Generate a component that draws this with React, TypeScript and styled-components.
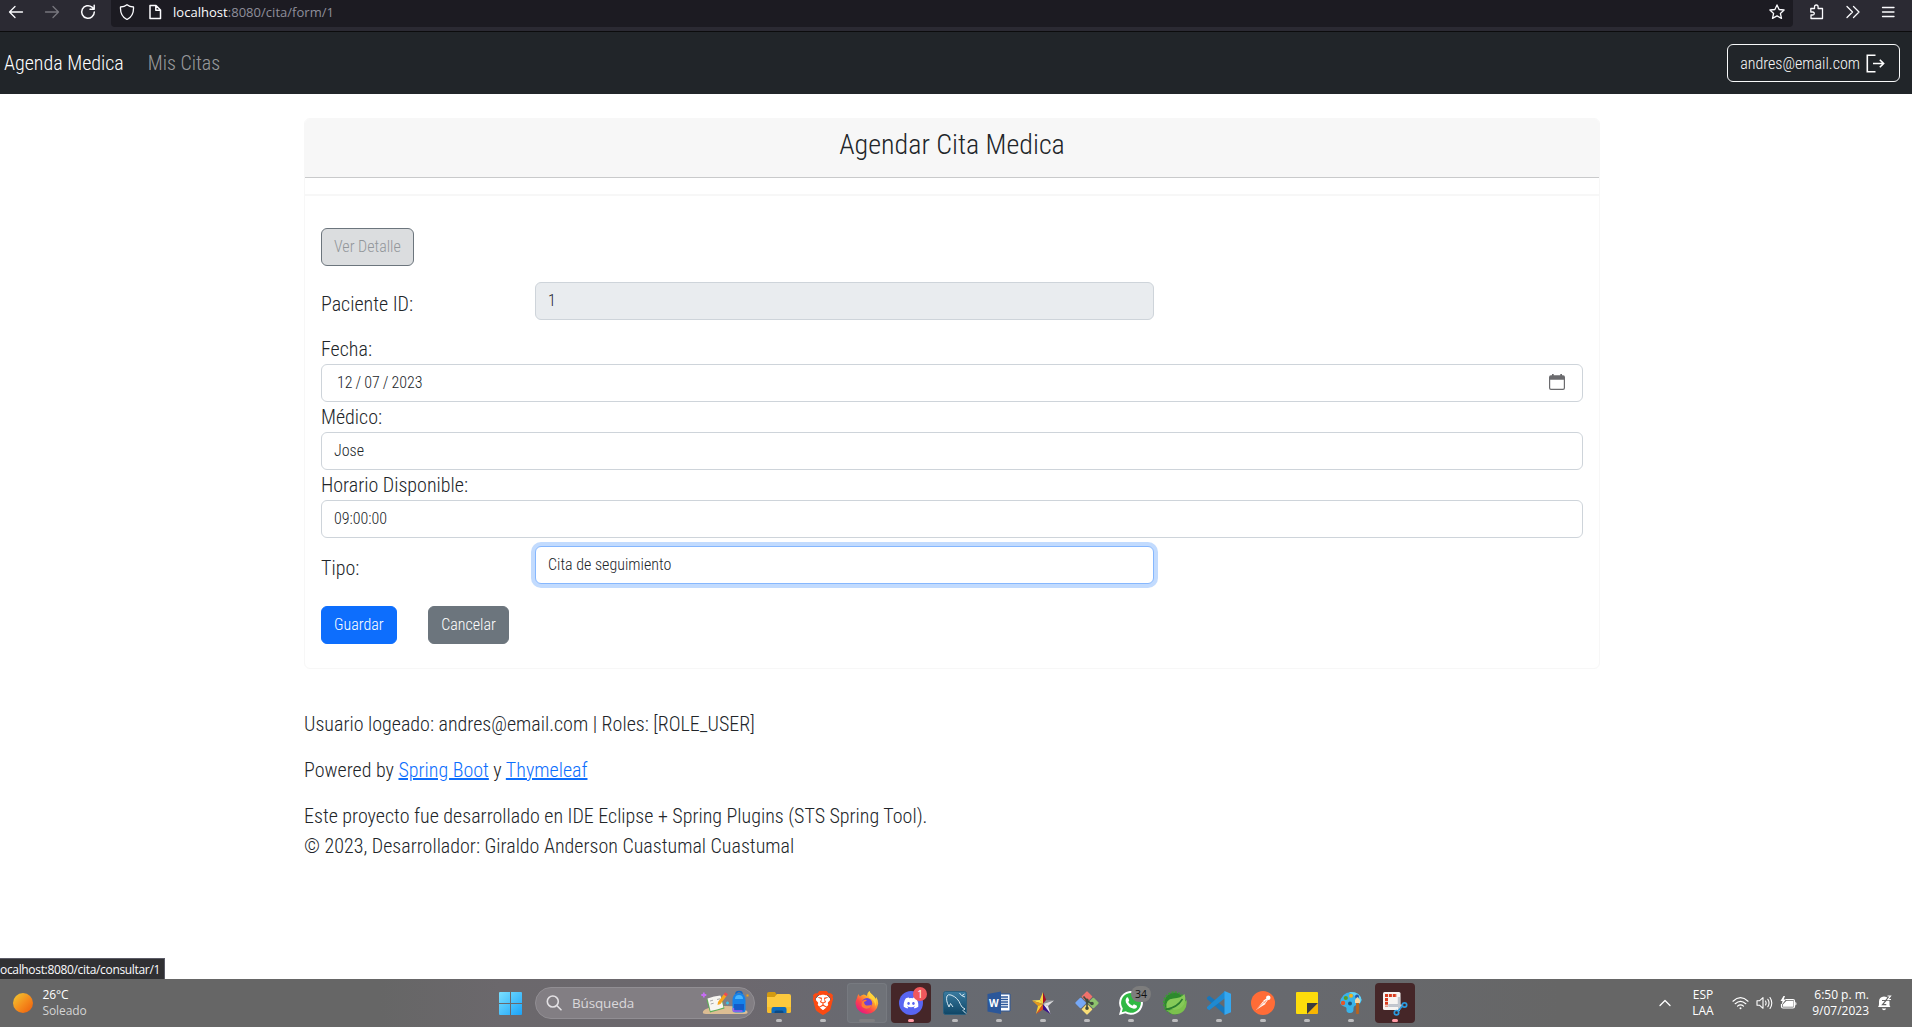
import React from "react";
import styled, { createGlobalStyle, css } from "styled-components";
import { FaDiscord } from "react-icons/fa";
import { SiBrave } from "react-icons/si";

const GlobalStyle = createGlobalStyle`
  *, *::before, *::after { box-sizing: border-box; }
  body {
    margin: 0;
    background: #fff;
    color: #212529;
    font-family: "Roboto Condensed", Roboto, sans-serif;
    font-stretch: 75%;
    font-weight: 300;
    font-size: 20px;
    line-height: 30px;
    overflow: hidden;
  }
  svg { display: block; flex: none; }
`;

const uiFont = css`
  font-family: "Open Sans", "Noto Sans", sans-serif;
  font-stretch: 100%;
  font-weight: 400;
`;

const Screen = styled.div`
  height: 1027px;
  display: flex;
  flex-direction: column;
  overflow: hidden;
`;

/* ---------- Browser toolbar ---------- */

const Toolbar = styled.header`
  flex: none;
  height: 32px;
  display: flex;
  align-items: flex-start;
  background: #2b2a33;
  border-bottom: 1px solid #0c0c0d;
  color: #fbfbfe;
`;

const NavIcons = styled.div`
  width: 111px;
  height: 24px;
  display: flex;
  align-items: center;
  padding-left: 8px;
  gap: 20px;
`;

const AddressBar = styled.div`
  flex: 1;
  height: 27px;
  padding: 0 8px 4px;
  display: flex;
  align-items: center;
  background: #1c1b22;
  border-radius: 0 0 4px 4px;
`;

const Url = styled.div`
  ${uiFont}
  flex: 1;
  margin-left: 10px;
  font-size: 13px;
  line-height: 20px;
  letter-spacing: 0.03px;
  color: #8f8f9b;
  b { font-weight: 400; color: #fbfbfe; }
`;

const MenuIcons = styled.div`
  width: 119px;
  height: 23px;
  display: flex;
  align-items: center;
  padding-left: 16px;
  gap: 19.5px;
`;

/* ---------- Site navigation ---------- */

const Navbar = styled.nav`
  flex: none;
  height: 62px;
  padding: 0 12px 0 4px;
  display: flex;
  align-items: center;
  gap: 24px;
  background: #212529;
`;

const NavLink = styled.a<{ $active?: boolean }>`
  color: ${(p) => (p.$active ? "#fff" : "rgba(255, 255, 255, 0.55)")};
`;

const buttonTones = {
  light: css`color: #f8f9fa; border-color: #f8f9fa;`,
  primary: css`color: #fff; background: #0d6efd; border-color: #0d6efd;`,
  secondary: css`color: #fff; background: #6c757d; border-color: #6c757d;`,
  muted: css`color: #92969a; background: #dbdddf; border-color: #6c757d;`,
};

const Button = styled.button<{ $tone: keyof typeof buttonTones }>`
  height: 38px;
  padding: 6px 12px;
  display: inline-flex;
  align-items: center;
  gap: 7px;
  font: inherit;
  font-size: 16px;
  line-height: 24px;
  border: 1px solid;
  border-radius: 6px;
  background: transparent;
  ${(p) => buttonTones[p.$tone]}
`;

const UserButton = styled(Button)`
  margin-left: auto;
  padding: 7px 14px 5px 12px;
  gap: 6px;
  svg { margin-top: -1px; }
`;

/* ---------- Page ---------- */

const Main = styled.main`
  flex: 1;
  width: 1296px;
  margin-left: 304px;
  padding-top: 24px;
`;

const Card = styled.section`
  height: 551px;
  border: 1px solid #f7f7f7;
  border-radius: 6px;
`;

const CardHeader = styled.div`
  height: 59px;
  padding-top: 9px;
  background: #f7f7f7;
  border-bottom: 1px solid #c9cacb;
  border-radius: 5px 5px 0 0;
  text-align: center;
`;

const Title = styled.h3`
  margin: 0;
  font-size: 28px;
  font-weight: 300;
  line-height: 34px;
`;

const Divider = styled.div`
  height: 2px;
  margin-top: 16px;
  background: #f7f7f7;
`;

const Form = styled.form`
  padding: 32px 16px 0;
  display: flex;
  flex-direction: column;
  align-items: stretch;
`;

const InlineRow = styled.div<{ $top: number; $bottom: number }>`
  display: flex;
  margin: ${(p) => p.$top}px 0 ${(p) => p.$bottom}px;
`;

const InlineLabel = styled.label`
  width: 214px;
  padding-top: 7px;
`;

const Control = styled.div<{ $width?: number; $disabled?: boolean; $focus?: boolean }>`
  height: 38px;
  width: ${(p) => (p.$width ? `${p.$width}px` : "100%")};
  padding: 6px 12px;
  display: flex;
  justify-content: space-between;
  font-size: 16px;
  line-height: 24px;
  border: 1px solid ${(p) => (p.$focus ? "#86b7fe" : "#ced4da")};
  border-radius: 6px;
  background: ${(p) => (p.$disabled ? "#e9ecef" : "#fff")};
  box-shadow: ${(p) => (p.$focus ? "0 0 0 4px rgba(13, 110, 253, 0.25)" : "none")};
`;

const DateText = styled.span`
  margin-left: 3px;
  word-spacing: -0.6px;
`;

const CalendarSlot = styled.span`
  padding: 3px 5px 0 0;
`;

const Actions = styled.div`
  display: flex;
  gap: 31.6px;
`;

const Footer = styled.footer`
  padding-top: 40px;
  p { margin: 0 0 16px; }
  a { color: #0d6efd; text-decoration: underline; }
`;

/* Link preview shown over the page's lower left corner */
const StatusTip = styled.div`
  ${uiFont}
  position: absolute;
  left: 0;
  top: 958px;
  width: 165px;
  height: 21px;
  padding-top: 1px;
  background: #303033;
  border-top: 1px solid #5b5b66;
  border-right: 1px solid #5b5b66;
  color: #fbfbfe;
  font-size: 12px;
  line-height: 20px;
  letter-spacing: -0.33px;
  white-space: nowrap;
`;

/* ---------- Taskbar ---------- */

const Taskbar = styled.div`
  ${uiFont}
  flex: none;
  height: 48px;
  display: flex;
  align-items: center;
  background: linear-gradient(90deg, #666 0, #666 380px, #6b686c 500px, #6c686e 740px, #676a71 900px, #67696e 1300px, #666 1560px);
  color: #fff;
  font-size: 12px;
  line-height: 16px;
`;

const Weather = styled.div`
  width: 499px;
  padding-left: 13px;
  display: flex;
  align-items: center;
  gap: 9.5px;
  letter-spacing: -0.1px;
  span { display: block; color: #d4d4d4; }
  span:first-child { color: #fff; }
`;

const Sun = styled.i`
  width: 20px;
  height: 20px;
  border-radius: 50%;
  background: linear-gradient(135deg, #f1c02f 10%, #f58a1b 55%, #ee650f 90%);
`;

const Search = styled.div`
  width: 220px;
  height: 32px;
  margin: 0 2px 0 13px;
  padding: 0 5px 0 10px;
  display: flex;
  align-items: center;
  border-radius: 16px;
  border: 1px solid #918e93;
  background: #827e83;
  color: #dad8db;
  font-size: 13.5px;
  letter-spacing: -0.15px;
  span { flex: 1; margin-left: 10px; }
`;

const TaskApp = styled.div<{ $tone?: "active" | "alert" }>`
  position: relative;
  width: 40px;
  height: 40px;
  margin: 0 2px;
  display: flex;
  align-items: center;
  justify-content: center;
  border-radius: 4px;
  ${(p) => p.$tone === "active" && css`background: #6f7278; box-shadow: inset 0 0 0 1px #777a80;`}
  ${(p) => p.$tone === "alert" && css`background: #452628;`}
  &::after {
    content: "";
    position: absolute;
    bottom: 1px;
    left: 50%;
    width: ${(p) => (p.$tone === "active" ? 16 : 6)}px;
    height: 3px;
    transform: translateX(-50%);
    border-radius: 2px;
    background: ${(p) => (p.$tone === "alert" ? "#ff99a4" : p.$tone === "active" ? "#7f7e80" : "#bcbcbe")};
  }
`;

const Badge = styled.span<{ $kind: "red" | "grey" }>`
  position: absolute;
  top: ${(p) => (p.$kind === "red" ? 4 : 3)}px;
  right: ${(p) => (p.$kind === "red" ? 4 : 0)}px;
  width: ${(p) => (p.$kind === "red" ? 14 : 20)}px;
  height: ${(p) => (p.$kind === "red" ? 14 : 16)}px;
  border-radius: 8px;
  background: ${(p) => (p.$kind === "red" ? "#f0585c" : "#7d7d7d")};
  color: ${(p) => (p.$kind === "red" ? "#fff" : "#111")};
  font-size: ${(p) => (p.$kind === "red" ? 10 : 10.5)}px;
  line-height: ${(p) => (p.$kind === "red" ? 14 : 16)}px;
  text-align: center;
`;

const Tray = styled.div`
  margin-left: auto;
  padding-right: 20px;
  display: flex;
  align-items: center;
`;

const TrayText = styled.div<{ $align: "center" | "right"; $width: number; $right: number }>`
  width: ${(p) => p.$width}px;
  margin-right: ${(p) => p.$right}px;
  text-align: ${(p) => p.$align};
  white-space: nowrap;
`;

const TrayIcons = styled.div`
  display: flex;
  align-items: center;
  gap: 7px;
`;

const Chevron = styled.div`
  margin-right: 12px;
`;

/* ---------- Icons ---------- */

type LineProps = { size?: number; d: string; width?: number; color?: string; box?: number };
const Line = ({ size = 16, d, width = 1.3, color = "currentColor", box = 16 }: LineProps) => (
  <svg width={size} height={size} viewBox={`0 0 ${box} ${box}`} fill="none" stroke={color} strokeWidth={width} strokeLinecap="round" strokeLinejoin="round">
    <path d={d} />
  </svg>
);

const LogoutIcon = () => (
  <svg width="19" height="19" viewBox="0 0 19 19" fill="none" stroke="#fff" strokeWidth="1.6">
    <path d="M9.500 1.300H1.300v16.400h8.200M7 9.500h10.500M13.800 5.800l3.800 3.700-3.800 3.700" />
  </svg>
);

const CalendarIcon = () => (
  <svg width="16" height="16" viewBox="0 0 16 16">
    <path d="M3 0h1.700v1.300h6.600V0H13v1.300h1A2 2 0 0 1 16 3.300V14a2 2 0 0 1-2 2H2a2 2 0 0 1-2-2V3.300a2 2 0 0 1 2-2h1zM1.200 5.700V14q0 .8.8.8h12q.8 0 .8-.8V5.700z" fill="#6b6b6e" fillRule="evenodd" />
  </svg>
);

const WindowsLogo = () => (
  <svg width="23" height="23" viewBox="0 0 23 23">
    <defs>
      <linearGradient id="win" x1="0" y1="0" x2="1" y2="1">
        <stop offset="0" stopColor="#7be0ff" />
        <stop offset="1" stopColor="#1ba3f8" />
      </linearGradient>
    </defs>
    <path d="M0 1q0-1 1-1h10v11H0zM12 0h10q1 0 1 1v10H12zM0 12h11v11H1q-1 0-1-1zM12 12h11v10q0 1-1 1H12z" fill="url(#win)" />
  </svg>
);

const SchoolArt = () => (
  <svg width="48" height="26" viewBox="0 0 48 26">
    <path d="M2 21.500q3-5 20-5.500t24 5q2 3-3 3H5q-4 0-3-2.500z" fill="#dcbd93" />
    <path d="M5.500 9.500 20 6.500l3.500 12L9 22.500z" fill="#5fae57" />
    <path d="m6.500 8.500 6.500-2 3 13-6.500 1.500zM13 6.500l6.500-1 3 12-6.500 2z" fill="#f7f5f1" />
    <path d="m9 11 3-.8M9.700 14l3-.8M16 9.500l3-.7" stroke="#a9a9a9" />
    <path d="m17 12 6-8 2.500 2-6 8-3 1z" fill="#f9a51a" />
    <path d="m22.500 4.500 1.800-2.300 2.700 2-1.700 2.300z" fill="#ec4b50" />
    <path d="M35 4q0-2.500 3-2.500T41 4" fill="none" stroke="#1264c2" strokeWidth="1.600" />
    <path d="M31.500 11q0-8 6.500-8t6.500 8v9q0 2.500-3 2.500h-7q-3 0-3-2.500z" fill="#1583ea" />
    <path d="M34 9q0-4 4-4t4 4z" fill="#47b4ff" />
    <path d="M33 14h10v5q0 2-2 2h-6q-2 0-2-2z" fill="#125bc9" />
    <path d="M32.500 18v3h9" fill="none" stroke="#a25cf1" strokeWidth="1.300" />
    <path d="M2.800 2.500v5M.3 5h5" stroke="#c66cf3" strokeWidth="1.800" />
    <path d="M26.500 11.500v3M25 13h3" stroke="#39c2ea" strokeWidth="1.300" />
    <path d="M45.500 4.500h2v2h-2z" fill="#f2a413" />
  </svg>
);

const FolderIcon = () => (
  <svg width="24" height="24" viewBox="0 0 24 24">
    <path d="M0 3q0-2 2-2h6l2 3v4H0z" fill="#d29a12" />
    <path d="M0 6h7.500L10 3h12q2 0 2 2v15q0 2-2 2H2q-2 0-2-2z" fill="#fcc93e" />
    <path d="M0 16h24v4q0 2-2 2H2q-2 0-2-2z" fill="#f9bd2b" />
    <path d="M4.500 22v-4q0-2 2-2h11q2 0 2 2v4z" fill="#0f6cbd" />
    <path d="M7.500 22v-1q0-1.500 1.500-1.500h6q1.500 0 1.500 1.500v1z" fill="#0b4a86" />
  </svg>
);

const FirefoxIcon = () => (
  <svg width="24" height="24" viewBox="0 0 24 24">
    <defs>
      <linearGradient id="fx" x1=".85" y1=".1" x2=".2" y2=".95">
        <stop offset="0" stopColor="#fff044" />
        <stop offset=".35" stopColor="#ffa02a" />
        <stop offset=".65" stopColor="#ff4647" />
        <stop offset="1" stopColor="#e31587" />
      </linearGradient>
    </defs>
    <path d="M2 7q.3-2.500 1.800-4 .2 1.700 1.200 2.600Q6.500 4 8.700 3.600 10.500 4 11.800 5q.2-3 2.500-5 .7 2 3 3.700T20.500 8l.7-2q2 3 2 6.500A11.400 11.400 0 0 1 .5 12.700Q.5 9.500 2 7z" fill="url(#fx)" />
    <circle cx="12" cy="12.300" r="5.200" fill="#6b42d8" />
    <path d="M7 10.500q2-2.700 5-1.500-1 1.700-3 1.900.3 3.600 4 3.600 2.500 0 4-1-1.500 4.500-6 4.200-5-.7-4.500-5.200z" fill="#ff7a32" />
    <path d="M14.300 0q.7 2 3 3.700t3.200 4.300.2 7.500Q19.500 8 14 6.500q-1.500-3 .3-6.500z" fill="#ffd23a" />
  </svg>
);

const DiscordDisc = styled.div`
  width: 24px;
  height: 24px;
  display: flex;
  align-items: center;
  justify-content: center;
  border-radius: 50%;
  background: #5865f2;
`;

/* White shield that shows through the lion's openings */
const BraveShield = styled.div`
  display: flex;
  background: radial-gradient(ellipse 8px 9px at center, #fff 95%, transparent);
`;

const WorkbenchIcon = () => (
  <svg width="24" height="24" viewBox="0 0 24 24">
    <defs>
      <linearGradient id="wb" x1="0" y1="0" x2="0" y2="1">
        <stop offset="0" stopColor="#3a7ba0" />
        <stop offset="1" stopColor="#0f4666" />
      </linearGradient>
    </defs>
    <rect x=".5" y=".5" width="23" height="23" rx="2" fill="url(#wb)" stroke="#2b5f7d" />
    <path d="M6 16Q2.500 9 4 5q1-2 4-1 7 2.500 9.500 9.500 1 3 4.500 4.500-1.500.5-2 1.500l3 3M6 16l1.500-3.500L10 16M16.500 2l2 2.500L22 6M19 4.500l2.500-1.500" fill="none" stroke="#d7e8f1" strokeWidth="1" />
  </svg>
);

const LetterW = styled.span`
  position: absolute;
  left: 10px;
  top: 12px;
  font: 700 10px/16px "Open Sans", sans-serif;
`;

const WordIcon = () => (
  <svg width="24" height="24" viewBox="0 0 24 24">
    <path d="M12 3h11v17H12z" fill="#fff" stroke="#2b579a" strokeWidth="1" />
    <path d="M14 6h7M14 8.500h7M14 11h7M14 13.500h7M14 16h7" stroke="#2b579a" strokeWidth="1.300" />
    <path d="M.5 3 14 .5v22.500L.5 20.500z" fill="#2b579a" />
  </svg>
);

const StarIcon = () => (
  <svg width="24" height="24" viewBox="0 0 24 24">
    <path d="M12 13 12 1 8.800 9z" fill="#f7d43b" />
    <path d="M12 13V1l3.200 8z" fill="#a31026" />
    <path d="M12 13 8.800 9 1 9.500z" fill="#fbe04a" />
    <path d="M12 13 1 9.500 7 15z" fill="#e69a1c" />
    <path d="M12 13 15.200 9 23 9.500z" fill="#8a8c90" />
    <path d="M12 13 23 9.500 17 15z" fill="#dcdcdf" />
    <path d="M12 13 7 15 5 23z" fill="#ffcf2c" />
    <path d="M12 13 5 23l7-4.500z" fill="#db4d21" />
    <path d="m12 13 5 2 2.500 8z" fill="#e9e5f2" />
    <path d="m12 13 7.500 10-7.500-4.500z" fill="#37108c" />
  </svg>
);

const GitIcon = () => (
  <svg width="24" height="24" viewBox="0 0 24 24">
    <g transform="rotate(45 12 12)">
      <rect x="3.500" y="3.500" width="8" height="8" rx="1" fill="#f0716b" />
      <rect x="12.500" y="3.500" width="8" height="8" rx="1" fill="#8ec36d" />
      <rect x="3.500" y="12.500" width="8" height="8" rx="1" fill="#76a8f6" />
      <rect x="12.500" y="12.500" width="8" height="8" rx="1" fill="#f8dd76" />
    </g>
    <path d="m8.500 5.500 3.500 4v8M12 10l4.500 2.500" stroke="#3f4a3d" strokeWidth="1.600" fill="none" />
    <path d="M12 7.500a1.700 1.700 0 1 1 0 3.400 1.700 1.700 0 0 1 0-3.400zM12 15.500a1.800 1.800 0 1 1 0 3.600 1.800 1.800 0 0 1 0-3.600zM17 10.700a1.800 1.800 0 1 1 0 3.600 1.800 1.800 0 0 1 0-3.600z" fill="#3f4a3d" />
  </svg>
);

const WhatsAppIcon = () => (
  <svg width="24" height="24" viewBox="0 0 24 24">
    <path d="M0 24l1.700-6.200A11.900 11.900 0 1 1 6.300 22.300z" fill="#fff" />
    <path d="m2.800 21.300 1-3.900A9.900 9.900 0 1 1 6.700 20.200z" fill="#2fb943" />
    <path d="M7.500 6.800q.8-.8 1.500-.3l1.200 2.700q.1.700-1 1.800 1.500 2.700 4.300 3.800l1.400-1.600 3 1.500q.5 3-3 3-5-.5-8-6.200-1-2.500.6-4.700z" fill="#fff" />
  </svg>
);

const SpringToolIcon = () => (
  <svg width="24" height="24" viewBox="0 0 24 24">
    <circle cx="11.500" cy="12" r="10.300" fill="#2d8a2d" />
    <circle cx="11.500" cy="12" r="10.800" fill="none" stroke="#3c9a35" strokeWidth="1.800" strokeDasharray="2 1.400" />
    <path d="M23.500 9q1 6-2.500 10.500-5 5-12 3.500l-6-4Q14 21 23.500 9z" fill="#7cc14d" />
    <path d="M3.500 17Q2 8 10.500 7.500 18 7 21.500 3q2.500 8-2.500 13-6 5.500-15.500 1z" fill="#86ca58" />
    <path d="M2.500 18.500Q14 17 19.500 8" fill="none" stroke="#2b7d2f" strokeWidth="1.500" />
  </svg>
);

const CodeIcon = () => (
  <svg width="24" height="24" viewBox="0 0 24 24">
    <path d="M0 6.500 2.200 4.700 18 16.800V24L0 8z" fill="#1a76b9" />
    <path d="M0 17.500 2.200 19.300 18 7.200V0L0 16z" fill="#1f8ad2" />
    <path d="m17.500 0 6.500 2.800v18.400L17.500 24z" fill="#35a7ef" />
  </svg>
);

const PostmanIcon = () => (
  <svg width="24" height="24" viewBox="0 0 24 24">
    <circle cx="12" cy="12" r="12" fill="#ff6c37" />
    <path d="m5 19 7-8.500 2.500 2.500z" fill="#fff" />
    <path d="m12 10 3.500-2.700 1.300 1.700-2.600 3.700z" fill="#fff" />
    <circle cx="17.300" cy="6.800" r="2.200" fill="#fff" />
    <path d="m6 18 8-7.500M13.500 12l1.800-3" stroke="#ff9a75" strokeWidth=".9" />
  </svg>
);

const NotesIcon = () => (
  <svg width="22" height="22" viewBox="0 0 22 22">
    <path d="M1 0h20q1 0 1 1v10H11v11H1q-1 0-1-1V1q0-1 1-1z" fill="#fddc0b" />
    <path d="M11 11h11L11 22z" fill="#3b3b3d" />
    <path d="M22 11v10q0 1-1 1H11z" fill="#f8b500" />
  </svg>
);

const PaintIcon = () => (
  <svg width="24" height="24" viewBox="0 0 24 24">
    <path d="M1 12Q2 2 12 1q9 0 10.500 8-.5 4-4 5-4 0-4 3.500.5 5-4.500 4.500-3-1-2.500-3.500T5 15.500 1 12z" fill="#39b3ea" />
    <path d="M12 1q9 0 10.500 8-1 3-3 2Q18 5 10 1.300z" fill="#63d2f6" />
    <circle cx="12" cy="4.800" r="2" fill="#f2b21c" />
    <circle cx="6.800" cy="7" r="2.100" fill="#5a9e25" />
    <circle cx="4" cy="12" r="2.200" fill="#e4562a" />
    <circle cx="18" cy="5.500" r="2" fill="#2559a8" />
    <circle cx="11" cy="12.500" r="2" fill="#23577b" />
    <path d="M17 12h3l-.2 11h-2.600z" fill="#b8641e" />
    <path d="M16 12V9q2-3 2.500-3 .5 1 2.500 3v3z" fill="#f3d7a5" />
  </svg>
);

const SnipIcon = () => (
  <svg width="26" height="25" viewBox="0 0 26 25">
    <rect x="1" y="1" width="17.500" height="18" rx="1.500" fill="#f6f4f2" />
    <path d="M3 4.500h12M4.500 3v12.500" stroke="#d83b1d" strokeWidth="3" strokeDasharray="3 .9" />
    <path d="M6.500 14.500h10.500V6" fill="none" stroke="#a9b0ba" strokeWidth="2.300" />
    <path d="M17 6v8.500h4M6.500 14.500H17V20" fill="none" stroke="#c3c8d0" strokeWidth="2" />
    <circle cx="22.500" cy="14" r="2.200" fill="none" stroke="#2a9be0" strokeWidth="1.700" />
    <circle cx="14.500" cy="21.700" r="2.200" fill="none" stroke="#2a9be0" strokeWidth="1.700" />
    <path d="m20.500 15-4 4.500" stroke="#2a9be0" strokeWidth="1.600" />
  </svg>
);

const WifiIcon = () => (
  <svg width="17" height="14" viewBox="0 0 17 14" fill="none" stroke="#fff" strokeWidth="1.200" strokeLinecap="round">
    <path d="M1 5.200q7.500-7 15 0M3.200 7.700q5.300-4.800 10.600 0M5.500 10.100q3-2.500 6 0" />
    <circle cx="8.500" cy="12.200" r="1" fill="#fff" stroke="none" />
  </svg>
);

const SpeakerIcon = () => (
  <svg width="17" height="14" viewBox="0 0 17 14" fill="none" stroke="#fff" strokeWidth="1.100" strokeLinejoin="round" strokeLinecap="round">
    <path d="M1 4.700h2.700L7 1.700v10.600L3.700 9.300H1zM9.500 5q1.200 2 0 4M11.800 3.300q2.500 3.700 0 7.400M14 1.500q3.600 5.500 0 11" />
  </svg>
);

const BatteryIcon = () => (
  <svg width="17" height="14" viewBox="0 0 17 14">
    <path d="M5.500 3.500H13q1.500 0 1.500 1.500v5.500Q14.500 12 13 12H3q-1.500 0-1.500-1.500V8" fill="none" stroke="#fff" strokeWidth="1.200" />
    <path d="M6.500 4.800H13.500v6H2.800V8.500zM15.300 6q1.200 0 1.200 1.700T15.300 9.500z" fill="#fff" />
    <path d="M3.500 0 .5 5h2L1.500 9 6 3.500H3.700L5 0z" fill="#fff" />
  </svg>
);

const BellIcon = () => (
  <svg width="15" height="16" viewBox="0 0 15 16">
    <path d="M1 12q1-1 1-3V6.500Q2 2 7 1.500q5.500.5 5.500 5.500v2.500q0 1.500 1 2.500zM4.800 13.500h4.400Q8.500 15.300 7 15.300t-2.200-1.800z" fill="#fff" />
    <path d="M5 5.500h4L5.500 9.700H9.300" fill="none" stroke="#666" strokeWidth="1.200" />
    <path d="M10 .8h3.500L10.500 4.500H14" fill="none" stroke="#666" strokeWidth="2.600" />
    <path d="M10.500 1h3L11 4.500h3" fill="none" stroke="#fff" strokeWidth="1.200" />
  </svg>
);

const taskApps: { name: string; icon: React.ReactNode; tone?: "active" | "alert" }[] = [
  { name: "files", icon: <FolderIcon /> },
  { name: "brave", icon: <BraveShield><SiBrave size={24} color="#fb4a12" /></BraveShield> },
  { name: "firefox", icon: <FirefoxIcon />, tone: "active" },
  { name: "discord", tone: "alert", icon: <><DiscordDisc><FaDiscord size={16} color="#fff" /></DiscordDisc><Badge $kind="red">1</Badge></> },
  { name: "workbench", icon: <WorkbenchIcon /> },
  { name: "word", icon: <><WordIcon /><LetterW>W</LetterW></> },
  { name: "star", icon: <StarIcon /> },
  { name: "git", icon: <GitIcon /> },
  { name: "whatsapp", icon: <><WhatsAppIcon /><Badge $kind="grey">34</Badge></> },
  { name: "spring", icon: <SpringToolIcon /> },
  { name: "code", icon: <CodeIcon /> },
  { name: "postman", icon: <PostmanIcon /> },
  { name: "notes", icon: <NotesIcon /> },
  { name: "paint", icon: <PaintIcon /> },
  { name: "snip", icon: <SnipIcon />, tone: "alert" },
];

export default function App() {
  return (
    <Screen>
      <GlobalStyle />
      <Toolbar>
        <NavIcons>
          <Line d="M14.500 8h-13M7 2.500 1.500 8 7 13.500" />
          <Line d="M1.500 8h13M9 2.500 14.500 8 9 13.500" color="#77767e" />
          <Line d="M14.300 8A6.300 6.300 0 1 1 12 3.100L13.800 5M14.200 1.200v4h-4.200" width={1.5} />
        </NavIcons>
        <AddressBar>
          <Line d="M8 .8Q10.500 3 14.500 3q.5 9-6.500 12.500Q1 12 1.500 3 5.500 3 8 .8z" />
          <svg width="28" height="16" viewBox="0 0 28 16" fill="none" stroke="#fbfbfe" strokeWidth="1.500" strokeLinejoin="round">
            <path d="M15 1.500h6l4.500 4.500v8.500H15zM20.800 1.500V6.300h4.700" />
          </svg>
          <Url><b>localhost</b>:8080/cita/form/1</Url>
          <Line d="m8 .9 2.100 4.600 5 .5-3.700 3.400 1.100 5L8 11.900l-4.500 2.500 1.100-5L.9 6l5-.5z" />
        </AddressBar>
        <MenuIcons>
          <Line d="M2.500 4.500h3V3q0-2 1.800-2t1.800 2v1.500H13.500V14.500H2V11H3.700q1.600 0 1.600-1.500T3.700 8H1.800V4.500z" />
          <Line d="m2 2.500 5.500 5.500L2 13.500M8.500 2.500 14 8l-5.500 5.500" />
          <Line d="M2.500 3.500h11.500M2.500 8h11.500M2.500 12.500h11.500" />
        </MenuIcons>
      </Toolbar>

      <Navbar>
        <NavLink $active>Agenda Medica</NavLink>
        <NavLink>Mis Citas</NavLink>
        <UserButton $tone="light">andres@email.com <LogoutIcon /></UserButton>
      </Navbar>

      <Main>
        <Card>
          <CardHeader><Title>Agendar Cita Medica</Title></CardHeader>
          <Divider />
          <Form>
            <div><Button type="button" $tone="muted">Ver Detalle</Button></div>
            <InlineRow $top={16} $bottom={14}>
              <InlineLabel>Paciente ID:</InlineLabel>
              <Control $width={619} $disabled>1</Control>
            </InlineRow>
            <label>Fecha:</label>
            <Control>
              <DateText>12 / 07 / 2023</DateText>
              <CalendarSlot><CalendarIcon /></CalendarSlot>
            </Control>
            <label>Médico:</label>
            <Control>Jose</Control>
            <label>Horario Disponible:</label>
            <Control>09:00:00</Control>
            <InlineRow $top={8} $bottom={22}>
              <InlineLabel>Tipo:</InlineLabel>
              <Control $width={619} $focus>Cita de seguimiento</Control>
            </InlineRow>
            <Actions>
              <Button type="button" $tone="primary">Guardar</Button>
              <Button type="button" $tone="secondary">Cancelar</Button>
            </Actions>
          </Form>
        </Card>
        <Footer>
          <p>Usuario logeado: andres@email.com | Roles: [ROLE_USER]</p>
          <p>Powered by <a>Spring Boot</a> y <a>Thymeleaf</a></p>
          <p>
            Este proyecto fue desarrollado en IDE Eclipse + Spring Plugins (STS Spring Tool).<br />
            © 2023, Desarrollador: Giraldo Anderson Cuastumal Cuastumal
          </p>
        </Footer>
      </Main>

      <StatusTip>ocalhost:8080/cita/consultar/1</StatusTip>

      <Taskbar>
        <Weather>
          <Sun />
          <div><span>26°C</span><span>Soleado</span></div>
        </Weather>
        <WindowsLogo />
        <Search>
          <Line d="M6.800 1a5.500 5.500 0 1 1 0 11 5.500 5.500 0 0 1 0-11zM10.800 10.500 15 14.800" width={1.6} color="#e3e1e4" />
          <span>Búsqueda</span>
          <SchoolArt />
        </Search>
        {taskApps.map((app) => (
          <TaskApp key={app.name} $tone={app.tone}>{app.icon}</TaskApp>
        ))}
        <Tray>
          <Chevron><Line size={12} box={12} d="m1 8.500 5-5 5 5" width={1.3} /></Chevron>
          <TrayText $align="center" $width={40} $right={9}>ESP<br />LAA</TrayText>
          <TrayIcons><WifiIcon /><SpeakerIcon /><BatteryIcon /></TrayIcons>
          <TrayText $align="right" $width={72} $right={8}>6:50 p. m.<br />9/07/2023</TrayText>
          <BellIcon />
        </Tray>
      </Taskbar>
    </Screen>
  );
}
